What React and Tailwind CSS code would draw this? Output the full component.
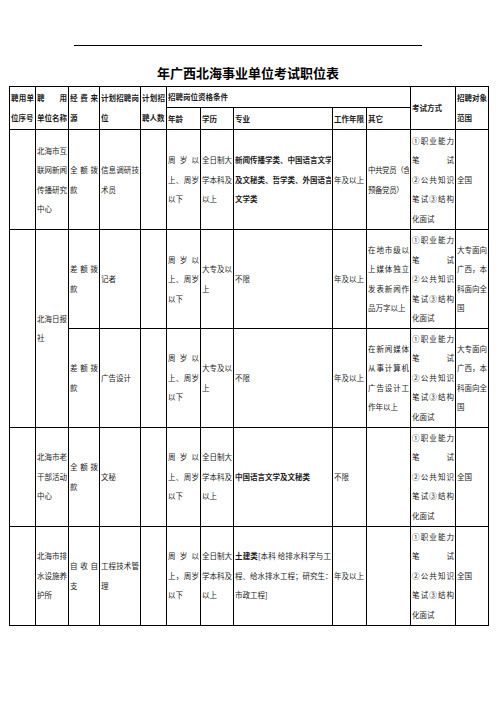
const cols = [26, 33, 31, 41, 26, 34, 33, 99, 34, 44, 45, 33]

const exam = ['①职业能力', '笔试', '②公共知识', '笔试③结构', '化面试']
const age = ['周岁以', '上、周岁', '以下']
const degree = ['全日制大', '学本科及', '以上']
const college = ['大专及以', '上']
const scope = ['大专面向', '广西，本', '科面向全', '国']

// one cell: explicit lines, every line but the last is justified (like the Word source)
function Cell({ lines = [], rowSpan, colSpan, bold, h, tight, lh = 'leading-[19.5px]' }) {
  return (
    <td
      rowSpan={rowSpan}
      colSpan={colSpan}
      className={`border border-black px-[1px] align-middle ${h || ''} ${bold ? 'font-bold' : ''}`}
    >
      <div className={`${lh} ${tight ? 'tracking-[-0.45px]' : ''}`}>
        {lines.map((l, i) => (
          <div
            key={i}
            className={`whitespace-nowrap overflow-hidden ${
              i < lines.length - 1 ? 'text-justify [text-align-last:justify]' : 'text-left'
            }`}
          >
            {l}
          </div>
        ))}
      </div>
    </td>
  )
}

export default function App() {
  return (
    <div
      className="min-h-[702px] w-[496px] bg-white text-black pt-[45px]"
      style={{ fontFamily: '"Noto Sans CJK SC", "Noto Sans", sans-serif' }}
    >
      <div className="mx-auto h-px w-[348px] bg-black" />
      <h1 className="mt-[17px] text-center text-[13px] font-bold leading-[20px]">
        年广西北海事业单位考试职位表
      </h1>

      <table className="ml-[9px] mt-[3px] table-fixed border-collapse text-[7.5px] text-[#1c1c1c]" style={{ width: 479 }}>
        <colgroup>
          {cols.map((w, i) => (
            <col key={i} style={{ width: w }} />
          ))}
        </colgroup>
        <tbody>
          {/* header */}
          <tr>
            <Cell rowSpan={2} bold lh="leading-[20px]" lines={['聘用单', '位序号']} />
            <Cell rowSpan={2} bold lh="leading-[20px]" lines={['聘用', '单位名称']} />
            <Cell rowSpan={2} bold lh="leading-[20px]" lines={['经费来', '源']} />
            <Cell rowSpan={2} bold lh="leading-[20px]" lines={['计划招聘岗', '位']} />
            <Cell rowSpan={2} bold lh="leading-[20px]" lines={['计划招', '聘人数']} />
            <Cell colSpan={5} bold h="h-[21px]" lh="leading-[20px]" lines={['招聘岗位资格条件']} />
            <Cell rowSpan={2} bold lh="leading-[20px]" lines={['考试方式']} />
            <Cell rowSpan={2} bold lh="leading-[20px]" lines={['招聘对象', '范围']} />
          </tr>
          <tr>
            <Cell bold h="h-[22px]" lh="leading-[20px]" lines={['年龄']} />
            <Cell bold lh="leading-[20px]" lines={['学历']} />
            <Cell bold lh="leading-[20px]" lines={['专业']} />
            <Cell bold lh="leading-[20px]" lines={['工作年限']} />
            <Cell bold lh="leading-[20px]" lines={['其它']} />
          </tr>

          {/* 互联网新闻传播研究中心 */}
          <tr>
            <Cell h="h-[100px]" />
            <Cell lines={['北海市互', '联网新闻', '传播研究', '中心']} />
            <Cell lines={['全额拨', '款']} />
            <Cell lines={['信息调研技', '术员']} />
            <Cell />
            <Cell lines={age} />
            <Cell lines={degree} />
            <Cell bold lines={['新闻传播学类、中国语言文学', '及文秘类、哲学类、外国语言', '文学类']} />
            <Cell lines={['年及以上']} />
            <Cell tight lines={['中共党员（含', '预备党员）']} />
            <Cell lines={exam} />
            <Cell lines={['全国']} />
          </tr>

          {/* 北海日报社 */}
          <tr>
            <Cell rowSpan={2} />
            <Cell rowSpan={2} lines={['北海日报', '社']} />
            <Cell h="h-[98px]" lines={['差额拨', '款']} />
            <Cell lines={['记者']} />
            <Cell />
            <Cell lines={age} />
            <Cell lines={college} />
            <Cell lines={['不限']} />
            <Cell lines={['年及以上']} />
            <Cell lines={['在地市级以', '上媒体独立', '发表新闻作', '品万字以上']} />
            <Cell lines={exam} />
            <Cell lines={scope} />
          </tr>
          <tr>
            <Cell h="h-[99px]" lines={['差额拨', '款']} />
            <Cell lines={['广告设计']} />
            <Cell />
            <Cell lines={age} />
            <Cell lines={college} />
            <Cell lines={['不限']} />
            <Cell lines={['年及以上']} />
            <Cell lines={['在新闻媒体', '从事计算机', '广告设计工', '作年以上']} />
            <Cell lines={exam} />
            <Cell lines={scope} />
          </tr>

          {/* 老干部活动中心 */}
          <tr>
            <Cell h="h-[99px]" />
            <Cell lines={['北海市老', '干部活动', '中心']} />
            <Cell lines={['全额拨', '款']} />
            <Cell lines={['文秘']} />
            <Cell />
            <Cell lines={age} />
            <Cell lines={degree} />
            <Cell bold lines={['中国语言文学及文秘类']} />
            <Cell lines={['不限']} />
            <Cell />
            <Cell lines={exam} />
            <Cell lines={['全国']} />
          </tr>

          {/* 排水设施养护所 */}
          <tr>
            <Cell h="h-[99px]" />
            <Cell lines={['北海市排', '水设施养', '护所']} />
            <Cell lines={['自收自', '支']} />
            <Cell lines={['工程技术管', '理']} />
            <Cell />
            <Cell lines={['周岁以', '上，周岁', '以下']} />
            <Cell lines={degree} />
            <Cell
              lines={[
                <>
                  <b>土建类</b>[本科 给排水科学与工
                </>,
                '程、给水排水工程；研究生：',
                '市政工程]',
              ]}
            />
            <Cell lines={['年及以上']} />
            <Cell />
            <Cell lines={exam} />
            <Cell lines={['全国']} />
          </tr>
        </tbody>
      </table>
    </div>
  )
}
